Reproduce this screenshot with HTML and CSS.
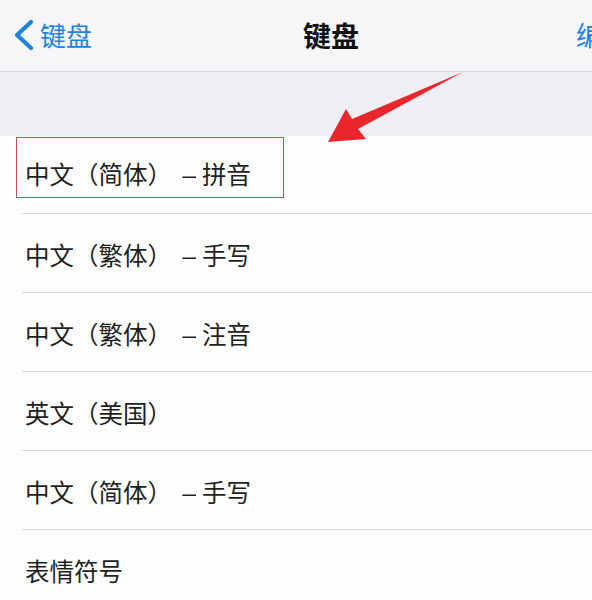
FILE: index.html
```html
<!DOCTYPE html>
<html lang="zh-CN">
<head>
<meta charset="utf-8">
<title>键盘</title>
<link rel="stylesheet" href="styles.css">
</head>
<body>
<div class="page">
  <header class="nav">
    <div class="back">
      <svg class="chev" width="22" height="32" viewBox="0 0 22 32"><path d="M19 3 L5 16 L19 29" fill="none" stroke="#1f83de" stroke-width="4.2" stroke-linecap="round" stroke-linejoin="round"/></svg>
      <span class="back-label">键盘</span>
    </div>
    <div class="title">键盘</div>
    <div class="edit">编辑</div>
  </header>
  <div class="gap"></div>
  <ul class="list">
    <li class="row first"><span>中文（简体）<span class="dash">–</span>拼音</span><div class="hl"></div></li>
    <li class="row"><span>中文（繁体）<span class="dash">–</span>手写</span></li>
    <li class="row"><span>中文（繁体）<span class="dash">–</span>注音</span></li>
    <li class="row"><span>英文（美国）</span></li>
    <li class="row"><span>中文（简体）<span class="dash">–</span>手写</span></li>
    <li class="row"><span>表情符号</span></li>
  </ul>
  <svg class="arrow" width="592" height="160" viewBox="0 0 592 160">
    <polygon points="463,72 358,129 366,139 328,142 346,109 352,119" fill="#e8262b"/>
  </svg>
</div>
</body>
</html>
```
FILE: styles.css
```css
* { box-sizing: border-box; margin: 0; padding: 0; }
html, body { width: 592px; height: 600px; overflow: hidden; background: #fdfdfd; }
body { font-family: "Noto Sans CJK SC", "Noto Sans", sans-serif; color: #1f1f1f; }
.page { position: relative; width: 592px; height: 600px; overflow: hidden; }
.nav {
  height: 72px;
  background: #f6f6f8;
  border-bottom: 1px solid #dcdce0;
  display: flex;
  align-items: center;
  white-space: nowrap;
}
.back { display: flex; align-items: center; padding-left: 12px; width: 303px; flex-shrink: 0; margin-top: -2px; }
.chev { display: block; }
.back-label { color: #1f83de; font-size: 26px; margin-left: 6px; line-height: 1; }
.title { font-size: 28px; font-weight: 700; color: #111; line-height: 1; width: 273px; flex-shrink: 0; margin-top: -2px; }
.edit { color: #1f83de; font-size: 27px; line-height: 1; flex-shrink: 0; margin-top: -2px; }
.gap { height: 64px; background: #efeff3; }
.list { list-style: none; background: #fdfdfd; }
.row {
  position: relative;
  height: 79px;
  display: flex;
  align-items: center;
  padding-left: 25px;
  padding-top: 5px;
  font-size: 24.5px;
  background-image: linear-gradient(#d8d8dc, #d8d8dc);
  background-size: calc(100% - 22px) 1px;
  background-position: 22px 0;
  background-repeat: no-repeat;
}
.row.first { height: 77px; padding-top: 0; background-image: none; }
.row span { line-height: 1; }
.dash {
  display: inline-block;
  width: 21px;
  margin-left: 9px;
  transform: scaleX(1.25);
  transform-origin: left center;
}
.hl {
  position: absolute;
  left: 16px;
  top: 1px;
  width: 268px;
  height: 61px;
  border: 1.5px solid #bf5259;
}
.arrow { position: absolute; left: 0; top: 0; filter: blur(0.6px); }
```
